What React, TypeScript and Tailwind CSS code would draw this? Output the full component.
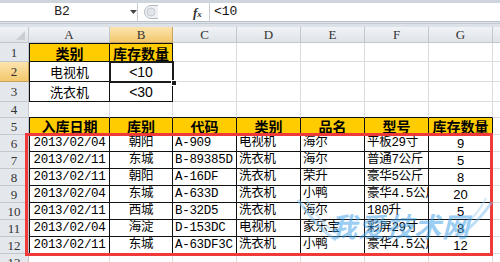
import React from "react";

const MONO = "font-['Liberation_Mono','Noto_Sans_CJK_SC',monospace]";
const CJK = "font-['Noto_Sans_CJK_SC',sans-serif]";
const SANS = "font-['Liberation_Sans','Noto_Sans_CJK_SC',sans-serif]";
const SERIF = "font-['Liberation_Serif',serif]";

const colW = ["w-[81px]", "w-[63px]", "w-[64px]", "w-[64px]", "w-[64px]", "w-[64px]", "w-[64px]", "w-[64px]"];
const rowH = ["h-[19px]", "h-[20px]", "h-[20px]", "h-[16px]", "h-[17px]", "h-[17px]", "h-[17px]", "h-[17px]", "h-[17px]", "h-[17px]", "h-[17px]", "h-[17px]", "h-[17px]"];
const letters = ["A", "B", "C", "D", "E", "F", "G", "H"];

// data by row number
const cells: Record<number, string[]> = {
  1: ["类别", "库存数量"],
  2: ["电视机", "<10"],
  3: ["洗衣机", "<30"],
  5: ["入库日期", "库别", "代码", "类别", "品名", "型号", "库存数量"],
  6: ["2013/02/04", "朝阳", "A-909", "电视机", "海尔", "平板29寸", "9"],
  7: ["2013/02/11", "东城", "B-89385D", "洗衣机", "海尔", "普通7公斤", "5"],
  8: ["2013/02/11", "朝阳", "A-16DF", "洗衣机", "荣升", "豪华5公斤", "8"],
  9: ["2013/02/04", "东城", "A-633D", "洗衣机", "小鸭", "豪华4.5公斤", "20"],
  10: ["2013/02/11", "西城", "B-32D5", "洗衣机", "海尔", "180升", "5"],
  11: ["2013/02/04", "海淀", "D-153DC", "电视机", "家乐宝", "彩屏29寸", "8"],
  12: ["2013/02/11", "东城", "A-63DF3C", "洗衣机", "小鸭", "豪华4.5公斤", "12"],
};

const inTable = (r: number, c: number) =>
  (r >= 1 && r <= 3 && c >= 0 && c <= 1) || (r >= 5 && r <= 12 && c >= 0 && c <= 6);

const isHead = (r: number, c: number) => (r === 1 && c <= 1) || (r === 5 && c <= 6);

function cellText(r: number, c: number) {
  const text = cells[r]?.[c];
  if (!text) return null;
  if (isHead(r, c)) {
    return <span className={`${CJK} text-[14px] font-bold leading-none`}>{text}</span>;
  }
  if (r <= 3) {
    return c === 0 ? (
      <span className={`${CJK} text-[13px] leading-none`}>{text}</span>
    ) : (
      <span className={`${SANS} text-[14px] leading-none`}>{text}</span>
    );
  }
  if (c === 6) return <span className={`${SANS} text-[13px] leading-none`}>{text}</span>;
  return <span className={`${MONO} text-[12.5px] tracking-[-0.3px] leading-none`}>{text}</span>;
}

function Cell({ r, c }: { r: number; c: number }) {
  const right = inTable(r, c) || inTable(r, c + 1) ? "border-r-[#111]" : "border-r-[#dadcdf]";
  const bottom = inTable(r, c) || inTable(r + 1, c) ? "border-b-[#111]" : "border-b-[#dadcdf]";
  const left = c === 0 && inTable(r, c) ? "border-l border-l-[#111]" : "";
  const top = r === 1 && inTable(r, c) ? "border-t border-t-[#111]" : "";
  const bg = isHead(r, c) ? "bg-[#ffcc00]" : "bg-white";
  const centered = r <= 5 || c === 0 || c === 1 || c === 6;
  const align = centered ? "justify-center" : "justify-start pl-[2px]";
  return (
    <div
      className={`${colW[c]} h-full shrink-0 flex items-center ${align} overflow-hidden whitespace-nowrap text-black border-r border-b ${right} ${bottom} ${left} ${top} ${bg}`}
    >
      {cellText(r, c)}
    </div>
  );
}

function FormulaBar() {
  return (
    <div className="h-[27px] bg-[#dde2e8] flex flex-col">
      <div className="h-[3px] bg-[#cfd5dd]" />
      <div className="h-[19px] bg-white flex items-center border-b border-[#b9c0c9]">
        <div className="w-[138px] h-full flex items-center border-r border-[#c8cdd4] relative">
          <span className={`${MONO} text-[13px] text-[#222] w-[125px] text-center`}>B2</span>
          <svg width="7" height="4" viewBox="0 0 7 4" className="ml-[6px]">
            <path d="M0 0h7L3.5 4z" fill="#444" />
          </svg>
        </div>
        <div className="w-[72px] h-full flex items-center border-r border-[#c8cdd4]">
          <svg width="17" height="16" viewBox="0 0 17 16" className="ml-[4px]">
            <path d="M16 1.5H9a6.5 6.5 0 0 0 0 13h7" fill="#eef0f3" stroke="#b6bbc2" />
            <circle cx="9" cy="8" r="4" fill="#e2e5e9" stroke="#c7cbd1" />
          </svg>
          <span className={`${SERIF} italic font-bold text-[13px] text-[#333] ml-[34px] leading-none`}>
            f<span className="text-[9px]">x</span>
          </span>
        </div>
        <span className={`${MONO} text-[13px] text-[#111] ml-[4px]`}>{"<10"}</span>
      </div>
      <div className="h-[1px] bg-[#c4cad2] mt-[1px]" />
    </div>
  );
}

function ColumnHeader() {
  return (
    <div className="flex h-[16px]">
      <div className="w-[29px] shrink-0 h-full bg-gradient-to-b from-[#f1f3f6] to-[#dfe3e8] border-r border-b border-[#c3c8cf] relative">
        <svg width="9" height="9" viewBox="0 0 9 9" className="absolute right-[3px] bottom-[2px]">
          <path d="M9 0V9H0z" fill="#c9ced5" />
        </svg>
      </div>
      {letters.map((l, i) => (
        <div
          key={l}
          className={`${colW[i]} shrink-0 h-full flex items-center justify-center border-r border-b ${
            i === 1
              ? "bg-gradient-to-b from-[#fce4ad] to-[#f3c86c] border-[#c9a45c]"
              : "bg-gradient-to-b from-[#f1f3f6] to-[#dfe3e8] border-[#c3c8cf]"
          }`}
        >
          <span className={`${SERIF} text-[13px] text-[#333] leading-none`}>{l}</span>
        </div>
      ))}
    </div>
  );
}

export default function App() {
  const rows = Array.from({ length: 13 }, (_, i) => i + 1);
  return (
    <div className="relative w-[500px] h-[262px] overflow-hidden bg-white">
      <FormulaBar />
      <ColumnHeader />
      {rows.map((r) => (
        <div key={r} className={`flex ${rowH[r - 1]}`}>
          <div
            className={`w-[29px] shrink-0 h-full flex items-center justify-center border-r border-b ${
              r === 2
                ? "bg-gradient-to-b from-[#fce4ad] to-[#f3c86c] border-[#c9a45c]"
                : "bg-[#e4e8ed] border-[#c3c8cf]"
            }`}
          >
            <span className={`${SERIF} text-[13px] text-[#333] leading-none`}>{r}</span>
          </div>
          {letters.map((_, c) => (
            <Cell key={c} r={r} c={c} />
          ))}
        </div>
      ))}

      {/* active cell B2 */}
      <div className="absolute left-[109px] top-[61px] w-[65px] h-[22px] border-2 border-[#1b1b1b]" />
      <div className="absolute left-[171px] top-[80px] w-[6px] h-[6px] bg-[#1b1b1b] border border-white" />

      {/* red highlight */}
      <div className="absolute left-[25px] top-[133px] w-[468px] h-[123px] border-[3px] border-[#f03a3a]" />

      {/* watermark */}
      <div className="absolute left-[296px] top-[196px] w-[200px] h-[60px] pointer-events-none opacity-50">
        <svg width="200" height="60" viewBox="0 0 200 60" className="absolute left-0 top-0">
          <path d="M2 4c12 16 22 30 38 40" stroke="#7fc0ef" strokeWidth="3" fill="none" />
          <path d="M10 2c10 18 20 30 32 36" stroke="#a9d6f5" strokeWidth="2" fill="none" />
          <path d="M196 6c-10 14-20 26-34 34" stroke="#7fc0ef" strokeWidth="3" fill="none" />
          <path d="M190 2c-8 16-18 26-30 32" stroke="#a9d6f5" strokeWidth="2" fill="none" />
        </svg>
        <div className={`${CJK} absolute left-[34px] top-[16px] text-[27px] font-bold italic text-[#3b9de6] leading-none tracking-[1px]`}>
          我爱技术网
        </div>
      </div>
    </div>
  );
}
